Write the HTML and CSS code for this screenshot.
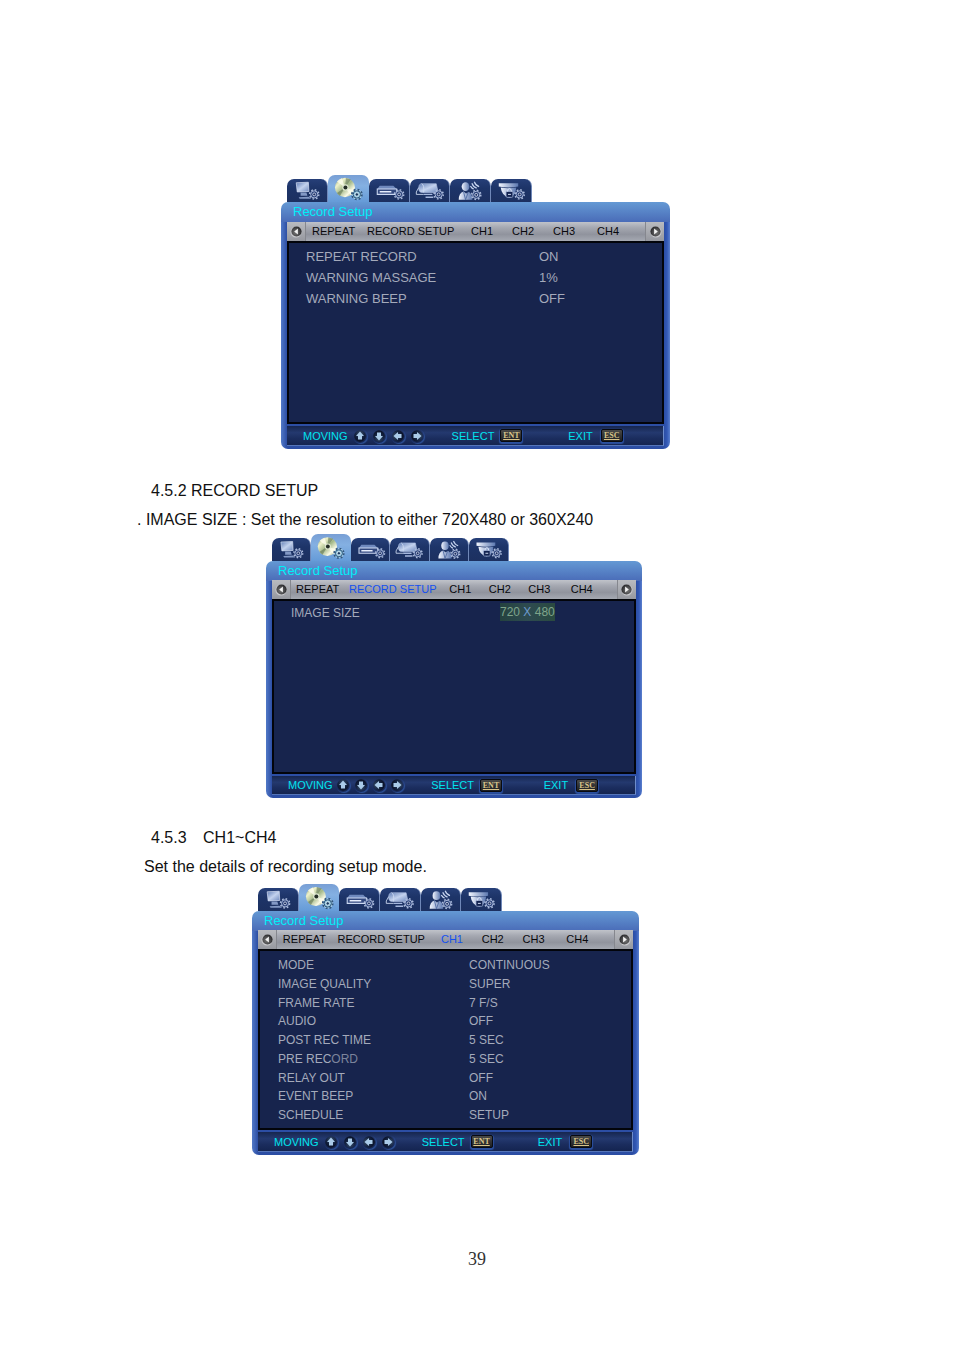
FILE: index.html
```
<!DOCTYPE html>
<html lang="en">
<head>
<meta charset="utf-8">
<meta name="viewport" content="width=device-width, initial-scale=1">
<title>Record Setup</title>
<link rel="stylesheet" href="styles.css">
</head>
<body>
<svg class="sprite" width="0" height="0" aria-hidden="true">
  <defs>
    <linearGradient id="glass" x1="0" y1="0" x2="1" y2="1">
      <stop offset="0" stop-color="#5f7cb4"/><stop offset=".5" stop-color="#c3d2ee"/><stop offset="1" stop-color="#6d88bd"/>
    </linearGradient>
    <linearGradient id="shine" x1="0" y1="0" x2="1" y2="0">
      <stop offset="0" stop-color="#f2f6ff"/><stop offset="1" stop-color="#5c78b0"/>
    </linearGradient>
    <linearGradient id="disc" x1="0" y1="0" x2="1" y2="1">
      <stop offset="0" stop-color="#7c8f64"/><stop offset=".25" stop-color="#eef2cc"/><stop offset=".5" stop-color="#a3b888"/><stop offset=".75" stop-color="#fbfbe6"/><stop offset="1" stop-color="#63774f"/>
    </linearGradient>
    <radialGradient id="ball" cx=".5" cy=".3" r=".75">
      <stop offset="0" stop-color="#38506f"/><stop offset=".6" stop-color="#101d3a"/><stop offset="1" stop-color="#080e20"/>
    </radialGradient>
    <radialGradient id="knob" cx=".6" cy=".6" r=".6">
      <stop offset="0" stop-color="#777"/><stop offset=".6" stop-color="#4c4c4e"/><stop offset="1" stop-color="#29292b"/>
    </radialGradient>
    <g id="gear">
      <circle r="4.700" fill="none" stroke="#a9b9db" stroke-width="1.600" stroke-dasharray="1.700 1.990"/>
      <circle r="3.700" fill="#2c437b" stroke="#a9b9db" stroke-width="1"/>
      <circle r="1.500" fill="#1c2e60" stroke="#dde6f8" stroke-width=".8"/>
    </g>
  </defs>
  <symbol id="i-monitor" viewBox="0 0 41 23">
    <path d="M9.500 3.500l12.500-.5.500 9.500-12 .5z" fill="url(#glass)" stroke="#dbe5f8" stroke-width=".7"/>
    <path d="M14 13.500h6l1 3.500h-7zM12 18.500l10-.5 3 2H13z" fill="#8298c4"/>
    <use href="#gear" x="28" y="15.500"/>
  </symbol>
  <symbol id="i-disc" viewBox="0 0 41 27">
    <ellipse cx="17" cy="12.500" rx="10" ry="9.700" fill="url(#disc)"/>
    <path d="M17 12.500L9 6.500a10 10 0 0 1 5-3.200zM17 12.500l9 3-3 5z" fill="#fffff0" opacity=".75"/>
    <path d="M17 12.500L18 3l5 1.500zM17 12.500l-5 8.500-3-3z" fill="#5f7354" opacity=".55"/>
    <circle cx="17.500" cy="12.500" r="3.200" fill="#dfe8d0"/><circle cx="17.500" cy="12.500" r="2" fill="#252f26"/>
    <circle cx="29" cy="19.500" r="5" fill="#b8dbec" stroke="#31557d" stroke-width="1.800" stroke-dasharray="1.900 2.030"/>
    <circle cx="29" cy="19.500" r="3.700" fill="#9bcbe2" stroke="#28537a"/>
    <circle cx="29" cy="19.500" r="1.700" fill="#173a60" stroke="#f0fbff" stroke-width=".7"/>
  </symbol>
  <symbol id="i-dvr" viewBox="0 0 41 23">
    <path d="M11 6.500h14l3.500 3.500h-20z" fill="#6f89bd"/>
    <path d="M8.500 10h20v5.500h-20z" fill="#33497f" stroke="#cbd8f1" stroke-width="1.100"/>
    <path d="M11 12.700h12" stroke="#e7eefc" stroke-width="1.600"/>
    <use href="#gear" x="31" y="15.500"/>
  </symbol>
  <symbol id="i-storage" viewBox="0 0 41 23">
    <path d="M12 4.500h15l2 9H12q-3 0-3-4.500t3-4.500z" fill="url(#glass)" stroke="#b8c8e8" stroke-width=".6"/>
    <path d="M12 4.500q3 1.500 2 9M9 8.500l-2.500 4.500v2.500H14" fill="none" stroke="#d0dcf2" stroke-width=".9"/>
    <path d="M14 15.500h9M16 18.500h8" stroke="#a6b8de" stroke-width="1.500"/>
    <use href="#gear" x="29.500" y="15.500"/>
  </symbol>
  <symbol id="i-user" viewBox="0 0 41 23">
    <ellipse cx="16" cy="7.500" rx="4" ry="4.500" fill="url(#shine)"/>
    <path d="M9 21q0-7 5-8.500l2.500 2 3-1.500q3.500 2 3.500 8z" fill="url(#shine)"/>
    <path d="M14 13l2 8 2.500-7" fill="none" stroke="#4c68a1" stroke-width=".9"/>
    <path d="M21 7q1.500 2.500 3.500 3M22.500 4q1.500 4 5 5M25 2.500q1.500 4 5 5" fill="none" stroke="#c6d4ef" stroke-width="1.200"/>
    <use href="#gear" x="27" y="16"/>
  </symbol>
  <symbol id="i-dome" viewBox="0 0 41 23">
    <path d="M8 4h20v3.500q-10 2-20 0z" fill="url(#shine)"/>
    <path d="M10 8.500q8 1.500 16 0-.5 9-7 10.500-8-1.500-9-10.500z" fill="url(#shine)"/>
    <rect x="15.500" y="12.500" width="7" height="6" rx="1" fill="#122250" stroke="#a9bbdf" stroke-width=".7"/>
    <path d="M17 12.500q0-3 2-3t2 3M17.500 15.500h3" fill="none" stroke="#dbe5fa"/>
    <use href="#gear" x="29.500" y="15.500"/>
  </symbol>
  <symbol id="i-move" viewBox="0 0 14 14">
    <circle cx="7" cy="7" r="5.800" fill="url(#ball)"/>
    <path d="M7 2.500l4 4.500H9v3.500H5V7H3z" fill="#a9cae8"/>
  </symbol>
  <symbol id="i-page" viewBox="0 0 14 14">
    <circle cx="7.500" cy="7.500" r="6" fill="#c9c9cd"/>
    <circle cx="7" cy="7" r="5.500" fill="url(#knob)"/>
    <path d="M5.500 3.800v6.400L9.500 7z" fill="#f2f2f2"/>
  </symbol>
</svg>

<main class="page">
  <section class="figure figure-repeat" aria-label="Repeat menu">
    <div class="osd">
      <div class="tabs">
        <button class="tab" aria-label="Display"><svg viewBox="0 0 41 23"><use href="#i-monitor"/></svg></button>
        <button class="tab tab-on" aria-label="Record"><svg viewBox="0 0 41 27"><use href="#i-disc"/></svg></button>
        <button class="tab" aria-label="Device"><svg viewBox="0 0 41 23"><use href="#i-dvr"/></svg></button>
        <button class="tab" aria-label="Storage"><svg viewBox="0 0 41 23"><use href="#i-storage"/></svg></button>
        <button class="tab" aria-label="User"><svg viewBox="0 0 41 23"><use href="#i-user"/></svg></button>
        <button class="tab" aria-label="Camera"><svg viewBox="0 0 41 23"><use href="#i-dome"/></svg></button>
      </div>
      <div class="frame">
        <h2 class="title">Record Setup</h2>
        <nav class="menu">
          <button class="pager" aria-label="Previous"><svg class="left" viewBox="0 0 14 14"><use href="#i-page"/></svg></button>
          <button class="item">REPEAT</button><button class="item">RECORD SETUP</button><button class="item">CH1</button><button class="item">CH2</button><button class="item">CH3</button><button class="item">CH4</button>
          <button class="pager pager-next" aria-label="Next"><svg viewBox="0 0 14 14"><use href="#i-page"/></svg></button>
        </nav>
        <dl class="screen">
          <dt>REPEAT RECORD</dt><dd>ON</dd>
          <dt>WARNING MASSAGE</dt><dd>1%</dd>
          <dt>WARNING BEEP</dt><dd>OFF</dd>
        </dl>
        <div class="help">
          <div class="keys keys-moving">MOVING
            <span class="moves"><button class="move" aria-label="Up"><svg viewBox="0 0 14 14"><use href="#i-move"/></svg></button><button class="move" aria-label="Down"><svg class="down" viewBox="0 0 14 14"><use href="#i-move"/></svg></button><button class="move" aria-label="Left"><svg class="west" viewBox="0 0 14 14"><use href="#i-move"/></svg></button><button class="move" aria-label="Right"><svg class="east" viewBox="0 0 14 14"><use href="#i-move"/></svg></button></span>
          </div>
          <div class="keys">SELECT <button class="key">ENT</button></div>
          <div class="keys keys-exit">EXIT <button class="key">ESC</button></div>
        </div>
      </div>
    </div>
  </section>

  <section class="copy">
    <h3 class="heading">4.5.2 RECORD SETUP</h3>
    <p class="bullet">. IMAGE SIZE : Set the resolution to either 720X480 or 360X240</p>
  </section>

  <section class="figure figure-size" aria-label="Record setup menu">
    <div class="osd">
      <div class="tabs">
        <button class="tab" aria-label="Display"><svg viewBox="0 0 41 23"><use href="#i-monitor"/></svg></button>
        <button class="tab tab-on" aria-label="Record"><svg viewBox="0 0 41 27"><use href="#i-disc"/></svg></button>
        <button class="tab" aria-label="Device"><svg viewBox="0 0 41 23"><use href="#i-dvr"/></svg></button>
        <button class="tab" aria-label="Storage"><svg viewBox="0 0 41 23"><use href="#i-storage"/></svg></button>
        <button class="tab" aria-label="User"><svg viewBox="0 0 41 23"><use href="#i-user"/></svg></button>
        <button class="tab" aria-label="Camera"><svg viewBox="0 0 41 23"><use href="#i-dome"/></svg></button>
      </div>
      <div class="frame">
        <h2 class="title">Record Setup</h2>
        <nav class="menu">
          <button class="pager" aria-label="Previous"><svg class="left" viewBox="0 0 14 14"><use href="#i-page"/></svg></button>
          <button class="item">REPEAT</button><button class="item item-on">RECORD SETUP</button><button class="item">CH1</button><button class="item">CH2</button><button class="item">CH3</button><button class="item">CH4</button>
          <button class="pager pager-next" aria-label="Next"><svg viewBox="0 0 14 14"><use href="#i-page"/></svg></button>
        </nav>
        <dl class="screen">
          <dt>IMAGE SIZE</dt><dd><span class="resolution">720 <span class="by">X</span> 480</span></dd>
        </dl>
        <div class="help">
          <div class="keys keys-moving">MOVING
            <span class="moves"><button class="move" aria-label="Up"><svg viewBox="0 0 14 14"><use href="#i-move"/></svg></button><button class="move" aria-label="Down"><svg class="down" viewBox="0 0 14 14"><use href="#i-move"/></svg></button><button class="move" aria-label="Left"><svg class="west" viewBox="0 0 14 14"><use href="#i-move"/></svg></button><button class="move" aria-label="Right"><svg class="east" viewBox="0 0 14 14"><use href="#i-move"/></svg></button></span>
          </div>
          <div class="keys">SELECT <button class="key">ENT</button></div>
          <div class="keys keys-exit">EXIT <button class="key">ESC</button></div>
        </div>
      </div>
    </div>
  </section>

  <section class="copy copy-channels">
    <h3 class="heading">4.5.3 <span class="subject">CH1~CH4</span></h3>
    <p class="text">Set the details of recording setup mode.</p>
  </section>

  <section class="figure figure-channel" aria-label="Channel menu">
    <div class="osd">
      <div class="tabs">
        <button class="tab" aria-label="Display"><svg viewBox="0 0 41 23"><use href="#i-monitor"/></svg></button>
        <button class="tab tab-on" aria-label="Record"><svg viewBox="0 0 41 27"><use href="#i-disc"/></svg></button>
        <button class="tab" aria-label="Device"><svg viewBox="0 0 41 23"><use href="#i-dvr"/></svg></button>
        <button class="tab" aria-label="Storage"><svg viewBox="0 0 41 23"><use href="#i-storage"/></svg></button>
        <button class="tab" aria-label="User"><svg viewBox="0 0 41 23"><use href="#i-user"/></svg></button>
        <button class="tab" aria-label="Camera"><svg viewBox="0 0 41 23"><use href="#i-dome"/></svg></button>
      </div>
      <div class="frame">
        <h2 class="title">Record Setup</h2>
        <nav class="menu">
          <button class="pager" aria-label="Previous"><svg class="left" viewBox="0 0 14 14"><use href="#i-page"/></svg></button>
          <button class="item">REPEAT</button><button class="item">RECORD SETUP</button><button class="item item-on">CH1</button><button class="item">CH2</button><button class="item">CH3</button><button class="item">CH4</button>
          <button class="pager pager-next" aria-label="Next"><svg viewBox="0 0 14 14"><use href="#i-page"/></svg></button>
        </nav>
        <dl class="screen">
          <dt>MODE</dt><dd>CONTINUOUS</dd>
          <dt>IMAGE QUALITY</dt><dd>SUPER</dd>
          <dt>FRAME RATE</dt><dd>7 F/S</dd>
          <dt>AUDIO</dt><dd>OFF</dd>
          <dt>POST REC TIME</dt><dd>5 SEC</dd>
          <dt>PRE REC<span class="faded">ORD</span></dt><dd>5 SEC</dd>
          <dt>RELAY OUT</dt><dd>OFF</dd>
          <dt>EVENT BEEP</dt><dd>ON</dd>
          <dt>SCHEDULE</dt><dd>SETUP</dd>
        </dl>
        <div class="help">
          <div class="keys keys-moving">MOVING
            <span class="moves"><button class="move" aria-label="Up"><svg viewBox="0 0 14 14"><use href="#i-move"/></svg></button><button class="move" aria-label="Down"><svg class="down" viewBox="0 0 14 14"><use href="#i-move"/></svg></button><button class="move" aria-label="Left"><svg class="west" viewBox="0 0 14 14"><use href="#i-move"/></svg></button><button class="move" aria-label="Right"><svg class="east" viewBox="0 0 14 14"><use href="#i-move"/></svg></button></span>
          </div>
          <div class="keys">SELECT <button class="key">ENT</button></div>
          <div class="keys keys-exit">EXIT <button class="key">ESC</button></div>
        </div>
      </div>
    </div>
  </section>

  <footer class="folio">39</footer>
</main>
</body>
</html>
```

FILE: styles.css
```
* { box-sizing: border-box; }

body {
  margin: 0;
  background: #fff;
  color: #111;
  font-family: "Liberation Sans", Arial, sans-serif;
  font-size: 16px;
}

.sprite { display: block; }
.page { padding: 175px 0 80px; }

button {
  margin: 0;
  padding: 0;
  border: 0;
  background: none;
  color: inherit;
  font: inherit;
  cursor: pointer;
}

/* Document text */
.copy { padding: 27px 0 0 137px; line-height: 29px; }
.copy-channels { padding-top: 25px; padding-bottom: 3px; }
.heading { margin: 0; padding-left: 14px; font-size: 16px; font-weight: 400; }
.subject { padding-left: 12px; }
.bullet { margin: 0; }
.text { margin: 0; padding-left: 7px; }
.folio {
  padding-top: 92px;
  color: #333;
  font-family: "Liberation Serif", serif;
  font-size: 18px;
  line-height: 24px;
  text-align: center;
}

/* On-screen menu */
.figure { display: grid; }
.osd { grid-column: 2; min-width: 0; }
.figure-repeat { grid-template-columns: 281fr 389fr 284fr; }
.figure-size { grid-template-columns: 266fr 376fr 312fr; }
.figure-channel { grid-template-columns: 252fr 387fr 315fr; }

.tabs {
  display: grid;
  grid-template-columns: repeat(6, 1fr);
  align-items: end;
  width: 63%;
  height: 27px;
  margin-left: 6px;
}
.tab {
  height: 23px;
  overflow: hidden;
  border-right: 1px solid #7088b8;
  border-radius: 7px 7px 0 0;
  background: linear-gradient(#263f78, #1d3468 40%, #1c3060);
}
.tab-on {
  height: 27px;
  border-right: 0;
  background: linear-gradient(#789fd5, #84b0e2 40%, #659bd8);
}
.tab svg { display: block; width: 100%; height: 100%; }

.frame {
  padding: 0 6px 3px;
  border-radius: 7px;
  background:
    linear-gradient(#6499d4, #4a6cb8 20px, transparent 20px),
    linear-gradient(90deg, #5279c7, #2c4ea4 6px, #2c4ea4 calc(100% - 6px), #3258b5 calc(100% - 3px), #5b80ce);
}
.title {
  margin: 0;
  padding-left: 6px;
  color: #00eef8;
  font-size: 13px;
  font-weight: 400;
  line-height: 19px;
}
.figure-repeat .title { line-height: 20px; }

.menu {
  display: grid;
  grid-template-columns: 25fr 55fr 104fr 41fr 41fr 44fr 48fr 19fr;
  height: 19px;
  background: linear-gradient(#c0c3ca, #a5a8b1 30%, #90939d 65%, #a5a9b2);
  color: #08080c;
  font-size: 11px;
  line-height: 17px;
}
.item { padding-bottom: 1px; text-align: left; white-space: nowrap; min-width: 0; }
.item-on { color: #1450f0; }
.pager {
  display: grid;
  place-items: center;
  width: 19px;
  border-right: 1px solid #85878e;
  background: linear-gradient(#b9bbc0, #96989f);
}
.pager-next { border-right: 0; border-left: 1px solid #85878e; }
.pager svg { width: 13px; height: 13px; }
.left { transform: scaleX(-1); }

.screen {
  display: grid;
  align-content: start;
  grid-template-columns: 250fr 123fr;
  grid-auto-rows: 21px;
  min-height: 183px;
  margin: 0;
  padding: 3px 0 3px 17px;
  border: 2px solid #02040a;
  background: #17244d;
  color: #a4aabb;
  font-size: 13px;
  line-height: 21px;
}
.screen dd { margin: 0; }
.figure-repeat .screen { grid-template-columns: 233fr 123fr; }
.figure-size .screen {
  grid-template-columns: 209fr 134fr;
  min-height: 175px;
  padding-top: 2px;
  font-size: 12px;
}
.figure-channel .screen {
  grid-template-columns: 191fr 162fr;
  grid-auto-rows: 1fr;
  align-content: stretch;
  min-height: 181px;
  padding-top: 5px;
  padding-left: 18px;
  font-size: 12px;
  line-height: 18px;
}
.faded { color: #7c849c; }
.resolution {
  display: block;
  width: 55px;
  background: linear-gradient(90deg, #24423f, #2e4b50 50%, #2a4a40);
  color: #7fa58c;
  font-size: 12px;
  line-height: 18px;
}
.by { color: #6c9acb; }

.help {
  display: grid;
  grid-template-columns: 149fr 117fr 95fr;
  align-items: center;
  height: 20px;
  margin-top: 2px;
  padding-left: 16px;
  border-right: 1px solid #6e8dcb;
  border-bottom: 1px solid #5575b8;
  background: linear-gradient(#16264f, #24396f 35%, #1b2d5e 65%, #142450);
  color: #00e4ee;
  font-size: 11px;
}
.figure-size .help { height: 19px; }
.keys { display: flex; align-items: center; gap: 6px; white-space: nowrap; }
.keys-exit { gap: 8px; }
.keys-moving { gap: 5px; }
.figure-size .keys-moving { gap: 3px; }
.moves { display: flex; gap: 5px; }
.figure-size .moves { gap: 4px; }
.move { border-radius: 50%; box-shadow: 1px 1px 1px #2d5199; }
.move svg { display: block; width: 14px; height: 14px; }
.down { transform: rotate(180deg); }
.west { transform: rotate(-90deg); }
.east { transform: rotate(90deg); }
.key {
  width: 22px;
  height: 13px;
  border: 1px solid #080a10;
  border-radius: 2px;
  background: linear-gradient(#4a4a48, #1c1d20);
  box-shadow: 0 1px 1px 1px #2b50a0;
  color: #d8c48a;
  font-family: "Liberation Serif", serif;
  font-size: 8px;
  font-weight: 700;
  line-height: 9px;
  text-decoration: underline;
}
```
